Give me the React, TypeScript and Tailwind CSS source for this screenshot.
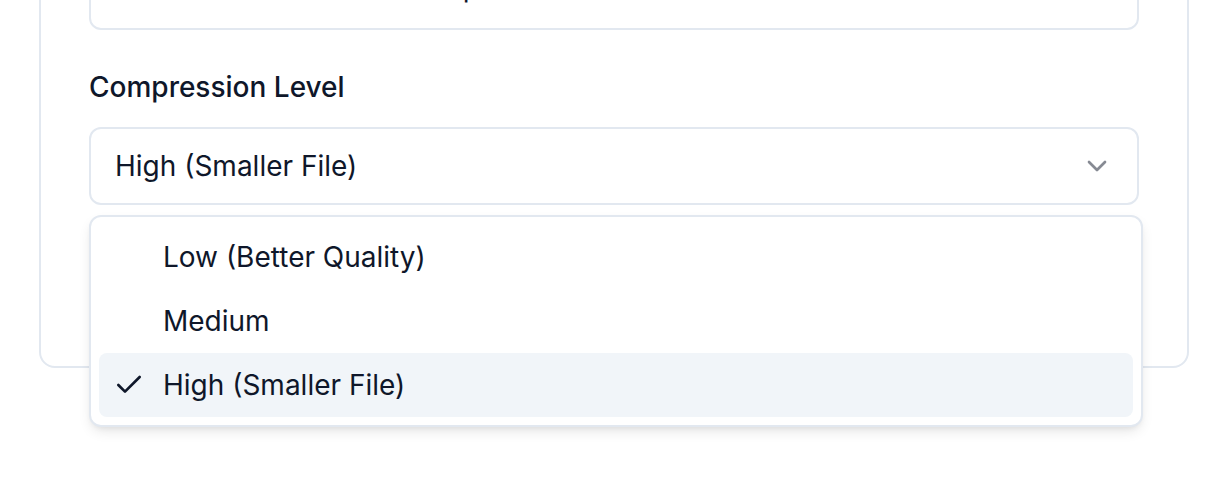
import { Check, ChevronDown } from 'lucide-react'

const options = ['Low (Better Quality)', 'Medium', 'High (Smaller File)']

export default function App() {
  const selected = 'High (Smaller File)'

  return (
    <div className="h-[488px] overflow-hidden bg-white font-['Inter','Noto_Sans',sans-serif] text-[#0f172a]">
      {/* Settings card, top scrolled out of view */}
      <div className="ml-[39px] -mt-[98px] w-[1150px] rounded-[16px] border-2 border-[#e2e8f0] bg-white px-[48px] pt-[48px] pb-[48px]">
        <div className="flex h-[78px] items-center rounded-[12px] border-2 border-[#e2e8f0] px-[24px] pb-[9px] text-[28px]">
          Customer database backup
        </div>

        <div className="mt-[37px] mb-[20px] text-[28px] leading-[40px] font-medium">Compression Level</div>

        <div className="relative">
          <div className="flex h-[78px] items-center justify-between rounded-[12px] border-2 border-[#e2e8f0] bg-white px-[24px] text-[28px]">
            <span>{selected}</span>
            <ChevronDown className="h-8 w-8 opacity-50" strokeWidth={2} />
          </div>

          {/* Open listbox */}
          <div className="absolute left-0 top-[88px] z-10 w-[1054px] rounded-[12px] border-2 border-[#e2e8f0] bg-white p-[8px] shadow-[0_6px_14px_-3px_rgba(0,0,0,0.12),0_3px_6px_-3px_rgba(0,0,0,0.08)]">
            {options.map((o) => (
              <div
                key={o}
                className={`relative flex h-[64px] items-center rounded-[8px] pl-[64px] text-[28px] ${o === selected ? 'bg-[#f1f5f9]' : ''}`}
              >
                {o === selected && (
                  <span className="absolute left-[14px] flex h-8 w-8 items-center justify-center">
                    <Check className="h-8 w-8" strokeWidth={2} />
                  </span>
                )}
                {o}
              </div>
            ))}
          </div>

          <div className="h-[113px]" />
        </div>
      </div>
    </div>
  )
}
